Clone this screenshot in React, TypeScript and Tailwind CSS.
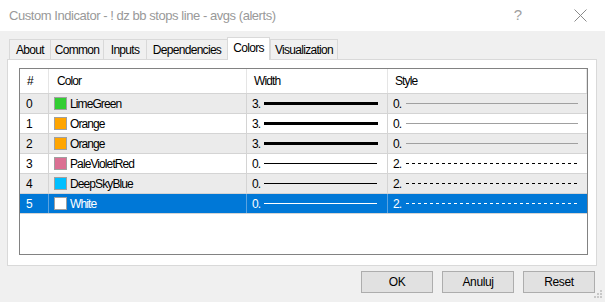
import React from "react";

const rows = [
  { n: "0", name: "LimeGreen", color: "#32cd32", w: "3.", thick: true, s: "0.", dashed: false },
  { n: "1", name: "Orange", color: "#ffa500", w: "3.", thick: true, s: "0.", dashed: false },
  { n: "2", name: "Orange", color: "#ffa500", w: "3.", thick: true, s: "0.", dashed: false },
  { n: "3", name: "PaleVioletRed", color: "#db7093", w: "0.", thick: false, s: "2.", dashed: true },
  { n: "4", name: "DeepSkyBlue", color: "#00bfff", w: "0.", thick: false, s: "2.", dashed: true },
  { n: "5", name: "White", color: "#ffffff", w: "0.", thick: false, s: "2.", dashed: true },
];

const tabs = [
  { label: "About", w: "w-[41px]" },
  { label: "Common", w: "w-[53px]" },
  { label: "Inputs", w: "w-[43px]" },
  { label: "Dependencies", w: "w-[81px]" },
  { label: "Colors", w: "w-[43px]", active: true },
  { label: "Visualization", w: "w-[68px]" },
];

function Row({ r, i }: { r: (typeof rows)[number]; i: number }) {
  const sel = i === 5;
  const bg = sel ? "bg-[#0078d7] text-white" : i % 2 === 0 ? "bg-[#ebebeb] text-black" : "bg-white text-black";
  const stroke = sel ? "#ffffff" : "#000000";
  const sep = sel ? "border-[#5aa3e0]" : "border-[#d4d4d4]";
  return (
    <div className={`grid grid-cols-[29px_198px_141px_199px] h-[20px] border-b border-[#d4d4d4] ${bg}`}>
      <div className={`flex items-center pl-[6px] border-r ${sep}`}>{r.n}</div>
      <div className={`flex items-center pl-[5px] border-r ${sep}`}>
        <div className="w-[13px] h-[13px] border border-[#a0a0a0] shrink-0" style={{ backgroundColor: r.color }} />
        <span className="ml-[3px]">{r.name}</span>
      </div>
      <div className={`flex items-center pl-[5px] border-r ${sep}`}>
        <span className="w-[12px]">{r.w}</span>
        <svg width="116" height="5" className="block">
          <line x1="0" y1="2.5" x2={r.thick ? 114 : 113} y2="2.5" stroke={stroke} strokeWidth={r.thick ? 3 : 1} />
        </svg>
      </div>
      <div className="flex items-center pl-[5px]">
        <span className="w-[13px]">{r.s}</span>
        <svg width="174" height="3" className="block">
          {r.dashed ? (
            <line x1="0" y1="1.5" x2="172" y2="1.5" stroke={stroke} strokeWidth={1} strokeDasharray="3 3" />
          ) : (
            <line x1="0" y1="1.5" x2="172" y2="1.5" stroke="#a0a0a0" strokeWidth={1} />
          )}
        </svg>
      </div>
    </div>
  );
}

export default function App() {
  return (
    <div
      className="w-[605px] h-[302px] bg-[#f0f0f0] flex flex-col relative overflow-hidden"
      style={{ fontFamily: '"Liberation Sans", Arial, sans-serif' }}
    >
      {/* Title bar */}
      <div className="h-[31px] bg-white flex items-center pl-[9px] shrink-0">
        <span className="text-[13px] text-[#999999] tracking-[-0.45px]">Custom Indicator - ! dz bb stops line - avgs (alerts)</span>
        <div className="flex-1" />
        <span className="text-[15px] text-[#a0a0a0] mr-[52px]">?</span>
        <svg width="13" height="13" className="mr-[18px]">
          <line x1="0.5" y1="0.5" x2="12.5" y2="12.5" stroke="#8a8a8a" strokeWidth="1" />
          <line x1="12.5" y1="0.5" x2="0.5" y2="12.5" stroke="#8a8a8a" strokeWidth="1" />
        </svg>
      </div>

      {/* Tabs */}
      <div className="mt-[6px] h-[22px] flex items-end pl-[9px] relative z-10">
        {tabs.map((t) =>
          t.active ? (
            <div
              key={t.label}
              className={`${t.w} h-[23px] -mb-px bg-white border border-b-0 border-[#d9d9d9] flex items-center justify-center text-[12px] tracking-[-0.7px] text-black pb-[3px]`}
            >
              {t.label}
            </div>
          ) : (
            <div
              key={t.label}
              className={`${t.w} h-[20px] bg-[#f0f0f0] border border-b-0 border-r-0 border-[#d9d9d9] last:border-r flex items-center justify-center text-[12px] tracking-[-0.7px] text-black pt-[1px]`}
            >
              {t.label}
            </div>
          )
        )}
      </div>

      {/* Panel */}
      <div className="ml-[7px] w-[590px] h-[207px] bg-white border border-[#d9d9d9] shrink-0">
        <div className="ml-[11px] mt-[8px] w-[569px] h-[187px] border border-[#828282] text-[12px] tracking-[-0.9px]">
          <div className="grid grid-cols-[29px_198px_141px_199px] h-[25px] border-b border-[#d4d4d4] bg-white text-black">
            <div className="flex items-center pl-[7px] border-r border-[#e5e5e5]">#</div>
            <div className="flex items-center pl-[8px] border-r border-[#e5e5e5]">Color</div>
            <div className="flex items-center pl-[7px] border-r border-[#e5e5e5]">Width</div>
            <div className="flex items-center pl-[7px] border-r border-[#e5e5e5]">Style</div>
          </div>
          {rows.map((r, i) => (
            <Row key={i} r={r} i={i} />
          ))}
        </div>
      </div>

      {/* Buttons */}
      <div className="mt-[5px] flex justify-end gap-[9px] pr-[10px]">
        {["OK", "Anuluj", "Reset"].map((b) => (
          <div
            key={b}
            className="w-[72px] h-[22px] bg-[#e1e1e1] border border-[#adadad] flex items-center justify-center text-[12px] tracking-[-0.4px] text-black"
          >
            {b}
          </div>
        ))}
      </div>

      {/* Resize grip */}
      <svg width="9" height="9" className="absolute right-[2px] bottom-[3px]">
        <rect x="6" y="0" width="2" height="2" fill="#c8c8c8" />
        <rect x="3" y="3" width="2" height="2" fill="#c8c8c8" />
        <rect x="6" y="3" width="2" height="2" fill="#c8c8c8" />
        <rect x="0" y="6" width="2" height="2" fill="#c8c8c8" />
        <rect x="3" y="6" width="2" height="2" fill="#c8c8c8" />
        <rect x="6" y="6" width="2" height="2" fill="#c8c8c8" />
      </svg>
    </div>
  );
}
